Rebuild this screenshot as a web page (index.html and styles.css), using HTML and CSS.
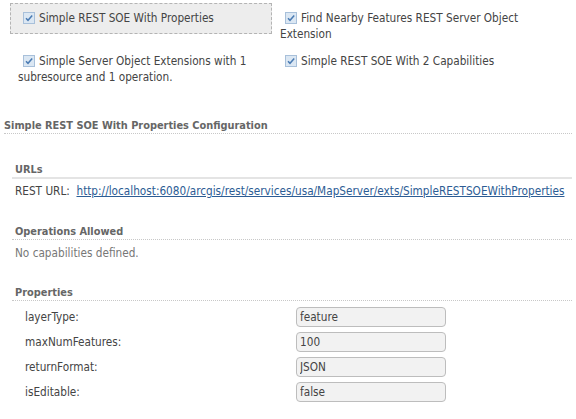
FILE: index.html
```html
<!DOCTYPE html>
<html>
<head>
<meta charset="utf-8">
<link rel="stylesheet" href="styles.css">
</head>
<body>
<div class="soe-grid">
  <div class="soe-item selected"><span class="cb"><svg width="12" height="12" viewBox="0 0 12 12"><rect x="0.5" y="0.5" width="11" height="11" fill="#dbe7f3" stroke="#a8c0da"/><path d="M3 6.2 L5 8.3 L9.2 3.6" fill="none" stroke="#4a7bb3" stroke-width="1.5"/></svg></span>Simple REST SOE With Properties</div>
  <div class="soe-item"><span class="cb"><svg width="12" height="12" viewBox="0 0 12 12"><rect x="0.5" y="0.5" width="11" height="11" fill="#dbe7f3" stroke="#a8c0da"/><path d="M3 6.2 L5 8.3 L9.2 3.6" fill="none" stroke="#4a7bb3" stroke-width="1.5"/></svg></span>Find Nearby Features REST Server Object Extension</div>
  <div class="soe-item"><span class="cb"><svg width="12" height="12" viewBox="0 0 12 12"><rect x="0.5" y="0.5" width="11" height="11" fill="#dbe7f3" stroke="#a8c0da"/><path d="M3 6.2 L5 8.3 L9.2 3.6" fill="none" stroke="#4a7bb3" stroke-width="1.5"/></svg></span>Simple Server Object Extensions with 1 subresource and 1 operation.</div>
  <div class="soe-item"><span class="cb"><svg width="12" height="12" viewBox="0 0 12 12"><rect x="0.5" y="0.5" width="11" height="11" fill="#dbe7f3" stroke="#a8c0da"/><path d="M3 6.2 L5 8.3 L9.2 3.6" fill="none" stroke="#4a7bb3" stroke-width="1.5"/></svg></span>Simple REST SOE With 2 Capabilities</div>
</div>

<div class="config-title">Simple REST SOE With Properties Configuration</div>

<div class="section urls">
  <div class="section-head">URLs</div>
  <div class="section-body">REST URL:&nbsp; <a href="#" class="link">http://localhost:6080/arcgis/rest/services/usa/MapServer/exts/SimpleRESTSOEWithProperties</a></div>
</div>

<div class="section ops">
  <div class="section-head">Operations Allowed</div>
  <div class="section-body muted">No capabilities defined.</div>
</div>

<div class="section props">
  <div class="section-head">Properties</div>
  <div class="prop-list">
    <div class="prop-row"><label class="prop-label">layerType:</label><input class="prop-input" type="text" value="feature"></div>
    <div class="prop-row"><label class="prop-label">maxNumFeatures:</label><input class="prop-input" type="text" value="100"></div>
    <div class="prop-row"><label class="prop-label">returnFormat:</label><input class="prop-input" type="text" value="JSON"></div>
    <div class="prop-row"><label class="prop-label">isEditable:</label><input class="prop-input" type="text" value="false"></div>
  </div>
</div>
</body>
</html>
```

FILE: styles.css
```css
html, body {
  margin: 0;
  padding: 0;
  background: #ffffff;
}
body {
  font-family: "DejaVu Sans Condensed", "DejaVu Sans", sans-serif;
  font-size: 11.7px;
  color: #444444;
  line-height: 16px;
}
.soe-grid {
  display: grid;
  grid-template-columns: 262px 262px;
  align-items: start;
  padding: 3px 0 0 10px;
}
.soe-item {
  border: 1px solid transparent;
  padding: 6px 7px 3px 7px;
}
.soe-item.selected {
  border: 1px dashed #b4b4b4;
  background: #ededed;
  padding-bottom: 7px;
}
.cb {
  display: inline-block;
  width: 12px;
  height: 12px;
  margin: 0 4px 0 5px;
  vertical-align: -2px;
}
.cb svg {
  display: block;
}
.config-title {
  margin: 30px 4px 0 4px;
  font-weight: bold;
  font-size: 10.9px;
  color: #666666;
  line-height: 14px;
  border-bottom: 1px dotted #c8c8c8;
}
.section {
  margin: 0 4px 0 12px;
}
.section-head {
  padding-left: 3px;
  font-weight: bold;
  font-size: 10.9px;
  color: #666666;
  line-height: 14px;
  border-bottom: 1px dotted #c8c8c8;
}
.urls {
  margin-top: 29px;
}
.urls .section-head {
  border-bottom: 2px solid #e4e4e4;
}
.section-body {
  padding-left: 3px;
  margin-top: 4px;
}
.link {
  color: #2c5c94;
  text-decoration: underline;
}
.muted {
  color: #777777;
}
.ops {
  margin-top: 26px;
}
.ops .section-body {
  margin-top: 5px;
}
.props {
  margin-top: 25px;
}
.prop-list {
  padding: 6px 0 0 13px;
}
.prop-row {
  display: grid;
  grid-template-columns: 271px 150px;
  align-items: center;
  margin-bottom: 5px;
}
.prop-label {
  color: #444444;
}
.prop-input {
  box-sizing: border-box;
  width: 150px;
  height: 20px;
  margin: 0;
  padding: 0 3px;
  border: 1px solid #bdbdbd;
  border-radius: 4px;
  background: #f2f2f2;
  font-family: inherit;
  font-size: 11.7px;
  color: #444444;
  outline: none;
}
```
